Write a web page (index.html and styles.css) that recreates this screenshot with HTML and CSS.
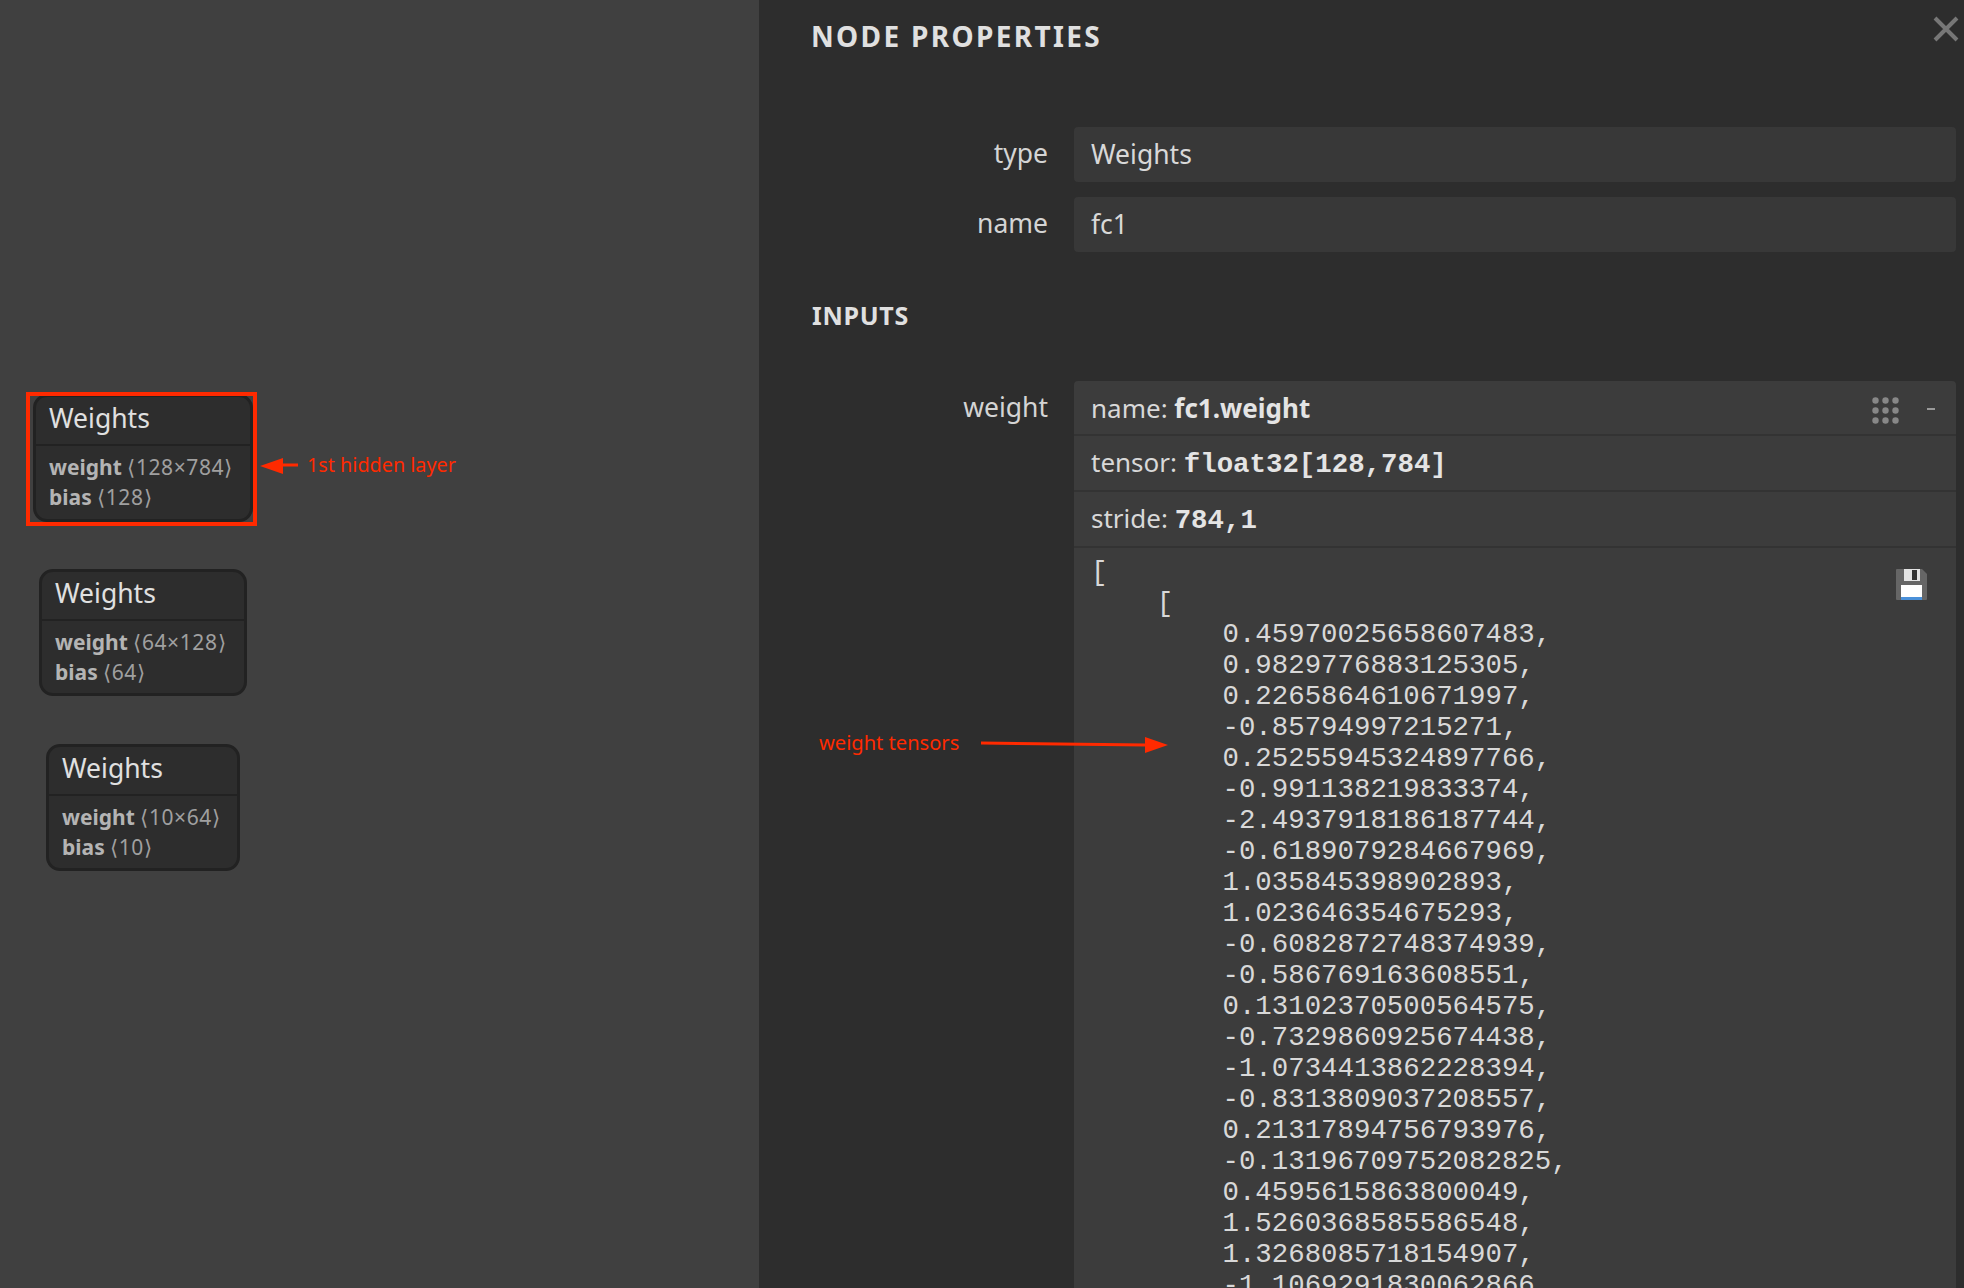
FILE: index.html
```html
<!DOCTYPE html>
<html lang="en">
<head>
    <title>Node properties</title>
    <link rel="stylesheet" href="styles.css">
</head>
<body>
    <div class="app">
        <!-- graph canvas -->
        <div class="graph">
            <div class="node node-first">
                <div class="node-title">Weights</div>
                <div class="node-attrs">
                    <div><b>weight</b> <span class="dims">⟨128×784⟩</span></div>
                    <div><b>bias</b> <span class="dims">⟨128⟩</span></div>
                </div>
            </div>
            <div class="node node-second">
                <div class="node-title">Weights</div>
                <div class="node-attrs">
                    <div><b>weight</b> <span class="dims">⟨64×128⟩</span></div>
                    <div><b>bias</b> <span class="dims">⟨64⟩</span></div>
                </div>
            </div>
            <div class="node node-third">
                <div class="node-title">Weights</div>
                <div class="node-attrs">
                    <div><b>weight</b> <span class="dims">⟨10×64⟩</span></div>
                    <div><b>bias</b> <span class="dims">⟨10⟩</span></div>
                </div>
            </div>
        </div>

        <!-- properties sidebar -->
        <div class="sidebar">
            <h1 class="sidebar-title">NODE PROPERTIES</h1>
            <svg class="close-btn" width="26" height="26" viewBox="0 0 26 26">
                <path d="M2 2 L24 24 M24 2 L2 24" stroke="#777" stroke-width="4" fill="none"/>
            </svg>

            <div class="prop-row prop-row-type">
                <div class="prop-label">type</div>
                <div class="prop-value">Weights</div>
            </div>
            <div class="prop-row">
                <div class="prop-label">name</div>
                <div class="prop-value">fc1</div>
            </div>

            <h2 class="section-title">INPUTS</h2>

            <div class="prop-row">
                <div class="prop-label">weight</div>
                <div class="tensor-box">
                    <div class="tensor-line tensor-head">
                        <span>name: <b>fc1.weight</b></span>
                        <span class="tensor-tools">
                            <svg width="27" height="27" viewBox="0 0 27 27" fill="#888">
                                <circle cx="3.5" cy="3.5" r="3.2"/><circle cx="13.5" cy="3.5" r="3.2"/><circle cx="23.5" cy="3.5" r="3.2"/>
                                <circle cx="3.5" cy="13.5" r="3.2"/><circle cx="13.5" cy="13.5" r="3.2"/><circle cx="23.5" cy="13.5" r="3.2"/>
                                <circle cx="3.5" cy="23.5" r="3.2"/><circle cx="13.5" cy="23.5" r="3.2"/><circle cx="23.5" cy="23.5" r="3.2"/>
                            </svg>
                            <span class="collapse-mark"></span>
                        </span>
                    </div>
                    <div class="tensor-line">tensor: <b class="mono">float32[128,784]</b></div>
                    <div class="tensor-line">stride: <b class="mono">784,1</b></div>
                    <div class="tensor-data">
                        <svg class="save-icon" width="31" height="31" viewBox="0 0 31 31">
                            <path d="M1 0 H26 L31 5 V30 Q31 31 30 31 H1 Q0 31 0 30 V1 Q0 0 1 0 Z" fill="#666"/>
                            <rect x="8" y="0" width="16" height="12" fill="#e4e4e4"/>
                            <rect x="16" y="1" width="5" height="10" fill="#333"/>
                            <rect x="5" y="16" width="21" height="15" fill="#fff"/>
                            <rect x="5" y="28" width="21" height="3" fill="#4a90d9"/>
                        </svg>
<pre class="tensor-values">[
    [
        0.45970025658607483,
        0.9829776883125305,
        0.2265864610671997,
        -0.85794997215271,
        0.25255945324897766,
        -0.991138219833374,
        -2.4937918186187744,
        -0.6189079284667969,
        1.035845398902893,
        1.023646354675293,
        -0.6082872748374939,
        -0.586769163608551,
        0.13102370500564575,
        -0.7329860925674438,
        -1.0734413862228394,
        -0.8313809037208557,
        0.21317894756793976,
        -0.13196709752082825,
        0.4595615863800049,
        1.5260368585586548,
        1.3268085718154907,
        -1.1069291830062866,</pre>
                    </div>
                </div>
            </div>
        </div>

        <!-- red annotations drawn on top of the screenshot -->
        <div class="mark-box"></div>
        <svg class="mark-arrows" width="1964" height="1288" viewBox="0 0 1964 1288">
            <path d="M283 465 H298" stroke="#ff2a00" stroke-width="3"/>
            <path d="M260 466 L283 458 V474 Z" fill="#ff2a00"/>
            <path d="M981 743 L1146 745" stroke="#ff2a00" stroke-width="3"/>
            <path d="M1168 745 L1145 737 V753 Z" fill="#ff2a00"/>
        </svg>
        <div class="mark-text mark-text-layer">1st hidden layer</div>
        <div class="mark-text mark-text-tensors">weight tensors</div>
    </div>
</body>
</html>
```

FILE: styles.css
```css
html, body {
    margin: 0;
    padding: 0;
    height: 100%;
    overflow: hidden;
}

body {
    font-family: "Noto Sans", "Open Sans", sans-serif;
    background-color: #404040;
    color: #e0e0e0;
}

.app {
    position: relative;
    display: flex;
    height: 1288px;
    overflow: hidden;
}

/* graph canvas */
.graph {
    position: relative;
    width: 759px;
    flex-shrink: 0;
    background-color: #404040;
}

.node {
    position: absolute;
    box-sizing: border-box;
    height: 127px;
    background-color: #2d2d2d;
    border: 3px solid #222;
    border-radius: 14px;
}

.node-first {
    left: 33px;
    top: 394px;
    width: 220px;
    height: 128px;
}

.node-second {
    left: 39px;
    top: 569px;
    width: 208px;
}

.node-third {
    left: 46px;
    top: 744px;
    width: 194px;
}

.node-title {
    height: 47px;
    line-height: 43px;
    padding-left: 13px;
    font-size: 26.5px;
    color: #e0e0e0;
    border-bottom: 2px solid #222;
}

.node-attrs {
    padding: 6px 0 0 13px;
    font-size: 21px;
    line-height: 30px;
    color: #a0a0a0;
    white-space: nowrap;
}

.node-attrs b {
    color: #b4b4b4;
}

.dims {
    letter-spacing: 0.6px;
}

/* properties sidebar */
.sidebar {
    position: relative;
    flex: 1;
    box-sizing: border-box;
    padding: 17px 8px 0 52px;
    background-color: #2d2d2d;
}

.sidebar-title {
    margin: 0 0 72px;
    font-size: 28px;
    line-height: 38px;
    font-weight: 700;
    letter-spacing: 2.35px;
    color: #e0e0e0;
}

.close-btn {
    position: absolute;
    top: 16px;
    right: 5px;
}

.prop-row {
    display: flex;
    gap: 26px;
    margin-bottom: 15px;
}

.prop-label {
    width: 237px;
    flex-shrink: 0;
    text-align: right;
    font-size: 26.5px;
    line-height: 52px;
    color: #d4d4d4;
}

.prop-value {
    flex: 1;
    height: 55px;
    box-sizing: border-box;
    padding-left: 17px;
    font-size: 26.5px;
    line-height: 54px;
    color: #d8d8d8;
    background-color: #383838;
    border-radius: 4px;
}

.section-title {
    margin: 45px 0 48px 1px;
    font-size: 25px;
    line-height: 36px;
    font-weight: 700;
    letter-spacing: 0.7px;
    color: #e0e0e0;
}

.tensor-box {
    flex: 1;
    min-width: 0;
    background-color: #3c3c3c;
    border-radius: 4px 4px 0 0;
    font-size: 26px;
    color: #d8d8d8;
}

.tensor-line {
    box-sizing: border-box;
    height: 56px;
    padding-left: 17px;
    line-height: 52px;
    border-bottom: 2px solid #333;
}

.tensor-head {
    display: flex;
    justify-content: space-between;
    height: 55px;
    line-height: 54px;
}

.tensor-tools {
    display: flex;
    align-items: flex-start;
    gap: 28px;
    padding: 16px 21px 0 0;
}

.collapse-mark {
    width: 8px;
    height: 2px;
    margin-top: 11px;
    background-color: #999;
}

.tensor-line b {
    color: #e4e4e4;
}

.mono {
    font-family: "Liberation Mono", monospace;
    font-size: 27.4px;
}

.tensor-data {
    position: relative;
    height: 740px;
    overflow: hidden;
    padding: 9px 0 0 17px;
}

.tensor-values {
    margin: 0;
    font-family: "Liberation Mono", monospace;
    font-size: 27.4px;
    line-height: 31px;
    color: #d8d8d8;
}

.save-icon {
    position: absolute;
    top: 21px;
    right: 29px;
}

/* annotations */
.mark-box {
    position: absolute;
    left: 26px;
    top: 392px;
    width: 231px;
    height: 134px;
    box-sizing: border-box;
    border: 4px solid #ff2a00;
}

.mark-arrows {
    position: absolute;
    left: 0;
    top: 0;
    pointer-events: none;
}

.mark-text {
    position: absolute;
    font-size: 19.8px;
    line-height: 28px;
    color: #ff2a00;
    white-space: nowrap;
}

.mark-text-layer {
    left: 307px;
    top: 451px;
}

.mark-text-tensors {
    left: 819px;
    top: 729px;
    font-size: 20.1px;
}
```
